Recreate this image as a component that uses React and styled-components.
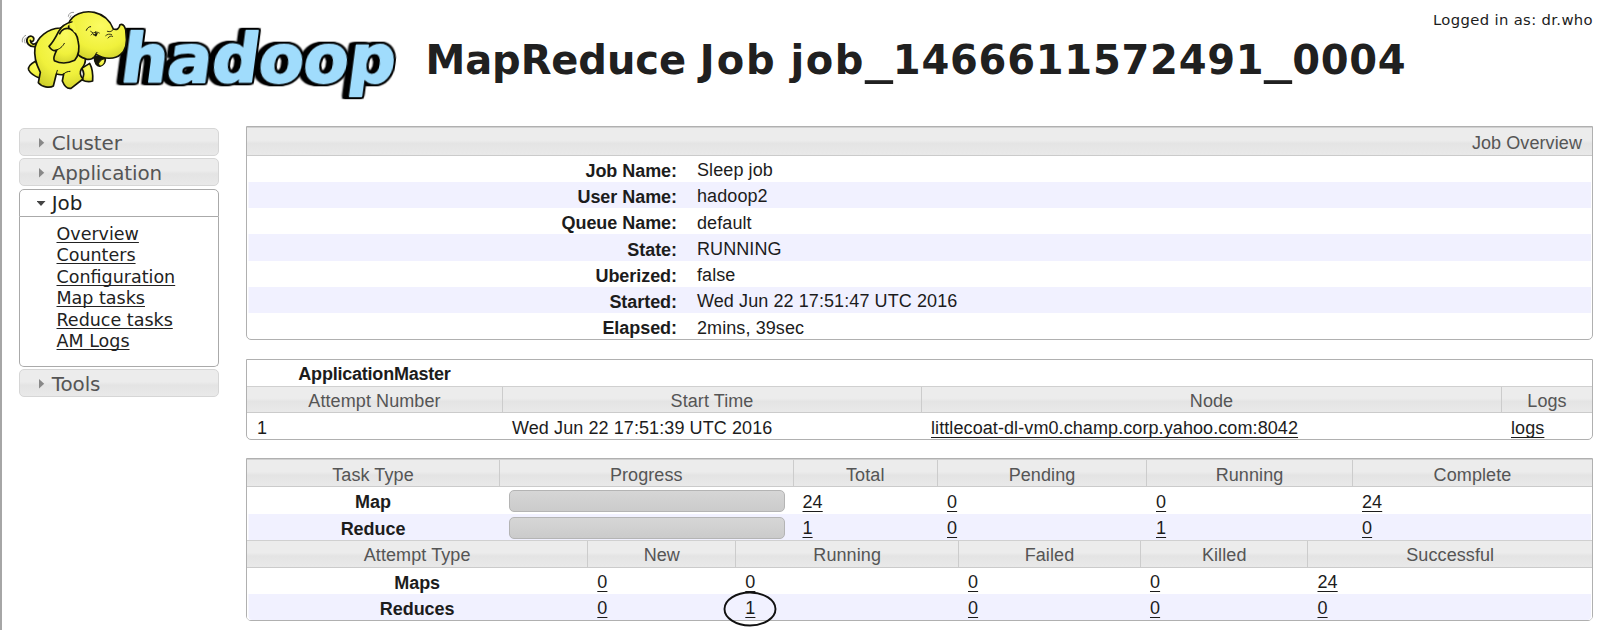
import React from "react";
import styled, { createGlobalStyle, css } from "styled-components";

const GlobalStyle = createGlobalStyle`
  * { box-sizing: border-box; }
  body { margin: 0; background: #fff; overflow: hidden; }
`;

const sans = css`font-family: "Liberation Sans", Arial, sans-serif;`;
const verdana = css`font-family: "DejaVu Sans", Verdana, sans-serif;`;
const barFill = css`background: linear-gradient(#ececec 0%, #ececec 45%, #e4e4e4 58%, #e9e9e9 100%);`;

const Page = styled.div`
  width: 1600px;
  height: 630px;
  border-left: 2px solid #a6a6a6;
  display: flex;
  flex-direction: column;
  color: #1c1c1c;
`;

const Header = styled.header`
  height: 126px;
  display: flex;
  align-items: flex-start;
`;

const LogoSvg = styled.svg`
  display: block;
  flex: none;
  width: 420px;
  height: 120px;
  margin-left: -2px;
`;

const Title = styled.h1`
  ${verdana}
  margin: 36px 0 0 5.5px;
  flex: none;
  width: 990px;
  font-size: 40px;
  line-height: 48px;
  letter-spacing: -0.1px;
  white-space: nowrap;
  color: #202020;
`;

const Spaced = styled.span`
  letter-spacing: ${(p) => p.$by}px;
`;

const Underscore = styled.span`
  display: inline-block;
  transform: scaleX(1.42);
  margin: 0 4px;
`;

const Login = styled.div`
  ${verdana}
  flex: 1;
  margin: 11px 7px 0 0;
  font-size: 14.8px;
  line-height: 18px;
  letter-spacing: 0.35px;
  text-align: right;
  white-space: nowrap;
`;

const Body = styled.div`
  display: flex;
  align-items: flex-start;
`;

const Nav = styled.nav`
  ${verdana}
  width: 200px;
  margin: 2px 27px 0 17px;
  display: flex;
  flex-direction: column;
  gap: 2.4px;
`;

const NavHead = styled.div`
  display: flex;
  align-items: center;
  height: 28px;
  padding: 2px 0 0 17px;
  gap: 5.8px;
  font-size: 19.9px;
  letter-spacing: -0.08px;
  color: ${(p) => (p.$open ? "#222" : "#555")};
  border: 1px solid ${(p) => (p.$open ? "#aaa" : "#d6d6d6")};
  border-radius: ${(p) => (p.$open ? "5px 5px 0 0" : "5px")};
  ${(p) => (p.$open ? "background: #fff;" : barFill)}
`;

const Arrow = styled.svg`
  width: 9px;
  height: 10px;
  display: block;
  flex: none;
`;

const NavBody = styled.div`
  height: 150px;
  border: 1px solid #aaa;
  border-top: 0;
  border-radius: 0 0 5px 5px;
  padding: 7px 0 0 36.5px;
  display: flex;
  flex-direction: column;
  align-items: flex-start;
`;

const NavLink = styled.a`
  height: 21.5px;
  line-height: 21.5px;
  font-size: 17.5px;
  color: #222;
  text-decoration: underline;
  text-decoration-thickness: 1px;
  text-underline-offset: 2px;
  text-decoration-skip-ink: none;
`;

const Main = styled.main`
  ${sans}
  font-size: 18px;
  letter-spacing: 0.09px;
  width: 1347px;
  display: flex;
  flex-direction: column;
`;

const Panel = styled.section`
  height: ${(p) => p.$h}px;
  margin-bottom: ${(p) => p.$gap || 0}px;
  border: 1px solid #b0b0b0;
  border-radius: 0 0 5px 5px;
`;

const Row = styled.div`
  display: grid;
  grid-template-columns: ${(p) => p.$cols};
  height: ${(p) => p.$h || 26.3}px;
  background: ${(p) => (p.$alt ? "#f1f1ff" : "transparent")};
  ${(p) => p.$alt && "box-shadow: inset 1.5px 0 #fff, inset -1px 0 #fff;"}
  &:last-child { border-radius: 0 0 4px 4px; }
`;

const HeadRow = styled(Row)`
  ${barFill}
  border-bottom: 1px solid #cbcbcb;
  border-top: 1px solid #d0d0d0;
`;

const Cell = styled.div`
  display: flex;
  align-items: center;
  justify-content: ${(p) => p.$align || "flex-start"};
  padding: 2.6px 10px 0;
  line-height: 22px;
  white-space: nowrap;
`;

const HeadCell = styled(Cell)`
  justify-content: ${(p) => p.$align || "center"};
  padding-top: 3px;
  color: #555;
  & + & { border-left: 1px solid #ccc; }
`;

const BoldCell = styled(Cell)`
  font-weight: bold;
  padding-top: 4px;
  letter-spacing: -0.05px;
`;

const MasterTitle = styled(BoldCell)`
  padding-top: 2px;
  letter-spacing: -0.22px;
`;

const Link = styled.a`
  position: relative;
  color: #1c1c1c;
  text-decoration: underline;
  text-decoration-thickness: 1px;
  text-underline-offset: 3px;
  text-decoration-skip-ink: none;
`;

const Circle = styled.svg`
  position: absolute;
  left: -22px;
  top: -6px;
  width: 54px;
  height: 36px;
  overflow: visible;
`;

const Bar = styled.div`
  width: 275.5px;
  flex: none;
  height: 22px;
  margin-top: -0.8px;
  border: 1px solid #b4b4b4;
  border-radius: 5px;
  background: linear-gradient(#d6d6d6, #cbcbcb);
`;

const WordmarkText = styled.text`
  font-family: "DejaVu Sans", Verdana, sans-serif;
  font-weight: bold;
  font-size: 200px;
  fill: #a0dcfc;
  stroke: #a0dcfc;
  stroke-width: 6px;
  stroke-linejoin: round;
  filter: drop-shadow(5px 0 0 #000) drop-shadow(0 5px 0 #000) drop-shadow(0 -5px 0 #000)
    drop-shadow(-7px 0 0 #000) drop-shadow(-7px 0 0 #000) drop-shadow(-6px 0 0 #000);
`;

const OverviewCols = "440px 1fr";
const MasterCols = "255px 419px 580px 1fr";
const TaskCols = "252px 293.5px 144.5px 209px 206px 1fr";
const AttemptCols = "340.3px 148px 222.7px 182px 167.5px 1fr";

const overview = [
  ["Job Name:", "Sleep job"],
  ["User Name:", "hadoop2"],
  ["Queue Name:", "default"],
  ["State:", "RUNNING"],
  ["Uberized:", "false"],
  ["Started:", "Wed Jun 22 17:51:47 UTC 2016"],
  ["Elapsed:", "2mins, 39sec"],
];
const tasks = [["Map", "24", "0", "0", "24"], ["Reduce", "1", "0", "1", "0"]];
const attempts = [["Maps", "0", "0", "0", "0", "24"], ["Reduces", "0", "1", "0", "0", "0"]];
const jobLinks = ["Overview", "Counters", "Configuration", "Map tasks", "Reduce tasks", "AM Logs"];

function Logo() {
  return (
    <LogoSvg viewBox="0 0 1260 360" role="img" aria-label="hadoop">
      <defs>
        <radialGradient id="skin" cx="0.55" cy="0.3" r="0.75">
          <stop offset="0" stopColor="#fbfb62" />
          <stop offset="0.65" stopColor="#f0f13c" />
          <stop offset="1" stopColor="#cfd02c" />
        </radialGradient>
      </defs>
      <g transform="translate(357 247) skewX(-7.5)">
        <WordmarkText textLength="822" lengthAdjust="spacingAndGlyphs">hadoop</WordmarkText>
      </g>
      <g stroke="#15150a" strokeWidth="5" strokeLinejoin="round" strokeLinecap="round" fill="url(#skin)">
        <path d="M106 140 C88 142 76 128 82 115 C88 104 104 108 101 120 C99 126 93 127 91 121 C92 133 102 136 110 128Z" />
        <path d="M106 184 C92 192 83 202 86 210 C93 224 108 230 118 234 L126 214Z" />
        <path d="M245 205 C254 218 252 230 245 239 C256 245 270 246 278 243 C279 225 277 204 269 190Z" />
        <path d="M180 84 C143 86 112 111 105 143 C101 169 110 196 121 217 L115 248 C125 261 149 265 160 258 L169 222 C181 225 188 225 191 222 L187 243 C193 258 203 267 213 265 L249 237 C241 228 238 218 244 207 C254 196 257 190 256 177 L275 130 L220 70Z" />
        <path d="M283 170 C283 190 291 200 301 198 C314 194 318 182 315 171Z" fill="#15150a" />
        <path d="M296 190 C302 178 311 176 315 178 C314 192 307 199 299 198Z" strokeWidth="3" />
        <path d="M205 72 C215 42 251 31 283 37 C313 44 330 60 340 87 C351 91 358 85 360 74 C370 70 378 82 378 101 C382 127 378 151 361 164 C343 180 311 177 289 163 C284 175 269 182 256 176 C231 170 214 143 210 108Z" />
        <path d="M216 66 C199 69 185 78 176 94 C168 110 160 126 147 139 C154 150 164 153 170 151 C164 163 158 174 163 182 C181 191 205 190 224 181 C237 165 239 142 234 122 C232 106 224 94 211 87 C199 81 184 89 179 101" />
      </g>
      <path d="M210 70 L222 66 L232 100 L222 96Z" fill="#f5f64c" />
      <g fill="none" stroke="#15150a" strokeWidth="4" strokeLinecap="round">
        <path d="M259 91 C262 83 267 80 272 80" strokeWidth="3" />
        <path d="M273 105 C281 96 290 94 298 99 M278 98 L272 94 M287 95 L287 108" strokeWidth="2.5" />
        <path d="M281 104 L288 106 L291 100" strokeWidth="4" />
        <path d="M322 94 C330 97 337 94 340 88 M317 107 C322 102 329 101 335 104 M324 114 C328 109 332 107 338 109" strokeWidth="2.5" />
        <path d="M284 171 C285 165 287 161 291 157 M191 222 C197 216 204 214 210 214 M165 151 C180 148 188 139 193 130 M169 221 L172 211" strokeWidth="3" />
      </g>
      <g fill="none" stroke="#999" strokeWidth="3" strokeLinecap="round">
        <path d="M205 49 C206 40 213 36 221 37 M209 54 L213 47 M67 126 C65 117 69 110 77 106 M75 129 C72 122 74 116 78 113" />
      </g>
    </LogoSvg>
  );
}

function NavItem({ label, open }) {
  return (
    <NavHead $open={open}>
      <Arrow viewBox="0 0 9 10">
        {open ? <path d="M-0.5 2H8.5L4 7Z" fill="#444" /> : <path d="M2 0V9.4L7.2 4.7Z" fill="#888" />}
      </Arrow>
      {label}
    </NavHead>
  );
}

export default function App() {
  return (
    <Page>
      <GlobalStyle />
      <Header>
        <Logo />
        <Title>
          MapReduce <Spaced $by={2}>Job</Spaced> <Spaced $by={1.5}>job</Spaced>
          <Underscore>_</Underscore>
          <Spaced $by={0.75}>1466611572491</Spaced>
          <Underscore>_</Underscore>
          <Spaced $by={0.65}>0004</Spaced>
        </Title>
        <Login>Logged in as: dr.who</Login>
      </Header>
      <Body>
        <Nav>
          <NavItem label="Cluster" />
          <NavItem label="Application" />
          <div>
            <NavItem label="Job" open />
            <NavBody>
              {jobLinks.map((l) => <NavLink key={l}>{l}</NavLink>)}
            </NavBody>
          </div>
          <NavItem label="Tools" />
        </Nav>
        <Main>
          <Panel $h={214} $gap={19}>
            <HeadRow $cols="1fr" $h={28.5}>
              <HeadCell $align="flex-end">Job Overview</HeadCell>
            </HeadRow>
            {overview.map(([k, v], i) => (
              <Row key={k} $cols={OverviewCols} $alt={i % 2 === 1}>
                <BoldCell $align="flex-end">{k}</BoldCell>
                <Cell>{v}</Cell>
              </Row>
            ))}
          </Panel>
          <Panel $h={81} $gap={18}>
            <Row $cols={MasterCols}>
              <MasterTitle $align="center">ApplicationMaster</MasterTitle>
            </Row>
            <HeadRow $cols={MasterCols} $h={27}>
              {["Attempt Number", "Start Time", "Node", "Logs"].map((h) => <HeadCell key={h}>{h}</HeadCell>)}
            </HeadRow>
            <Row $cols={MasterCols}>
              <Cell>1</Cell>
              <Cell>Wed Jun 22 17:51:39 UTC 2016</Cell>
              <Cell><Link>littlecoat-dl-vm0.champ.corp.yahoo.com:8042</Link></Cell>
              <Cell><Link>logs</Link></Cell>
            </Row>
          </Panel>
          <Panel $h={163}>
            <HeadRow $cols={TaskCols} $h={28}>
              {["Task Type", "Progress", "Total", "Pending", "Running", "Complete"].map((h) => <HeadCell key={h}>{h}</HeadCell>)}
            </HeadRow>
            {tasks.map(([name, ...vals], i) => (
              <Row key={name} $cols={TaskCols} $alt={i === 1} $h={26.5}>
                <BoldCell $align="center">{name}</BoldCell>
                <Cell><Bar /></Cell>
                {vals.map((v, j) => <Cell key={j}><Link>{v}</Link></Cell>)}
              </Row>
            ))}
            <HeadRow $cols={AttemptCols} $h={27.5}>
              {["Attempt Type", "New", "Running", "Failed", "Killed", "Successful"].map((h) => <HeadCell key={h}>{h}</HeadCell>)}
            </HeadRow>
            {attempts.map(([name, ...vals], i) => (
              <Row key={name} $cols={AttemptCols} $alt={i === 1}>
                <BoldCell $align="center">{name}</BoldCell>
                {vals.map((v, j) => (
                  <Cell key={j}>
                    <Link>
                      {v}
                      {i === 1 && j === 1 && (
                        <Circle viewBox="0 0 54 36">
                          <ellipse cx="27" cy="18" rx="25.5" ry="16.5" fill="none" stroke="#111" strokeWidth="1.9" />
                        </Circle>
                      )}
                    </Link>
                  </Cell>
                ))}
              </Row>
            ))}
          </Panel>
        </Main>
      </Body>
    </Page>
  );
}
